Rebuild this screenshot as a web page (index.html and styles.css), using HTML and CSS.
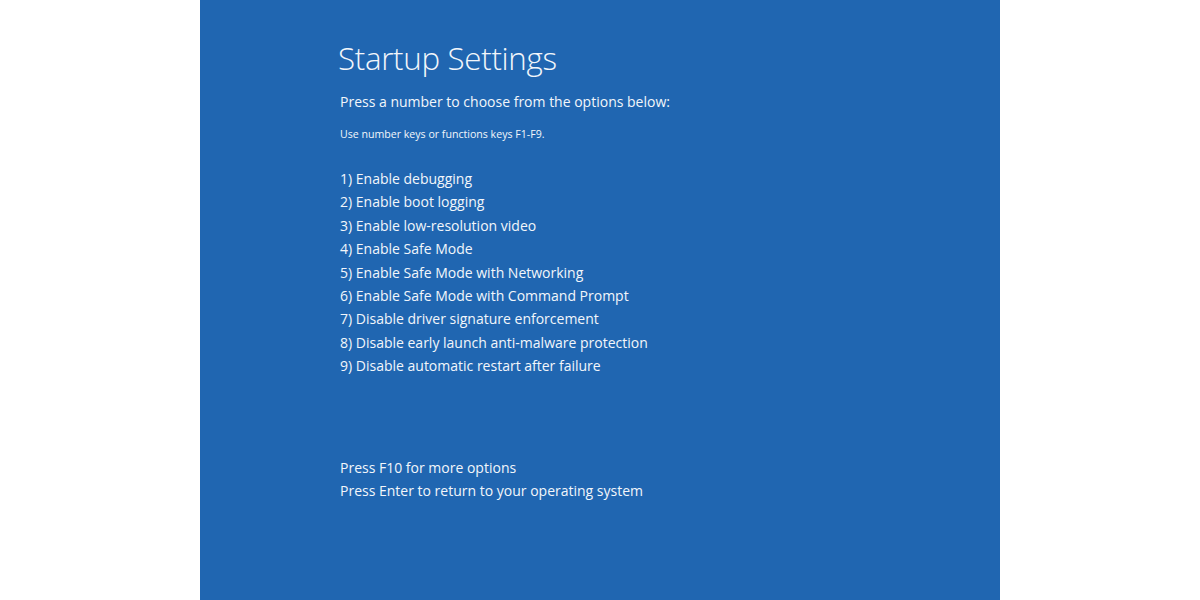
FILE: index.html
```html
<!DOCTYPE html>
<html lang="en">

<head>
	<meta charset="UTF-8">
	<title>Startup Settings</title>
	<link rel="stylesheet" href="styles.css">
</head>

<body>
	<!-- blue boot screen -->
	<div class="screen">
		<div class="box">
			<h1 class="title">Startup Settings</h1>
			<p class="lead">Press a number to choose from the options below:</p>
			<p class="hint">Use number keys or functions keys F1-F9.</p>

			<ul class="options">
				<li>1) Enable debugging</li>
				<li>2) Enable boot logging</li>
				<li>3) Enable low-resolution video</li>
				<li>4) Enable Safe Mode</li>
				<li>5) Enable Safe Mode with Networking</li>
				<li>6) Enable Safe Mode with Command Prompt</li>
				<li>7) Disable driver signature enforcement</li>
				<li>8) Disable early launch anti-malware protection</li>
				<li>9) Disable automatic restart after failure</li>
			</ul>

			<ul class="foot">
				<li>Press F10 for more options</li>
				<li>Press Enter to return to your operating system</li>
			</ul>
		</div>
	</div>
</body>

</html>
```

FILE: styles.css
```css
* {
	margin: 0;
	padding: 0;
}
html,body{
	height: 100%;
	background-color: #fff;
}
li {
	list-style: none;
}
.screen{
	margin: 0 auto;
	width: 800px;
	height: 600px;
	background-color: #2066b1;
	color: #f2f6fb;
	font-family: "Open Sans", "Noto Sans", sans-serif;
	overflow: hidden;
}
.box{
	padding: 37px 0 0 138px;
}
.title{
	font-size: 31.3px;
	font-weight: 300;
	line-height: 42px;
	letter-spacing: -0.3px;
}
.lead{
	margin-top: 12px;
	padding-left: 2px;
	font-size: 14px;
	line-height: 22px;
}
.hint{
	margin-top: 13px;
	padding-left: 2px;
	font-size: 10.6px;
	line-height: 16px;
}
.options{
	margin-top: 25px;
	padding-left: 2px;
	font-size: 14px;
	line-height: 23.4px;
}
.foot{
	margin-top: 78px;
	padding-left: 2px;
	font-size: 14px;
	line-height: 23.4px;
}
```
